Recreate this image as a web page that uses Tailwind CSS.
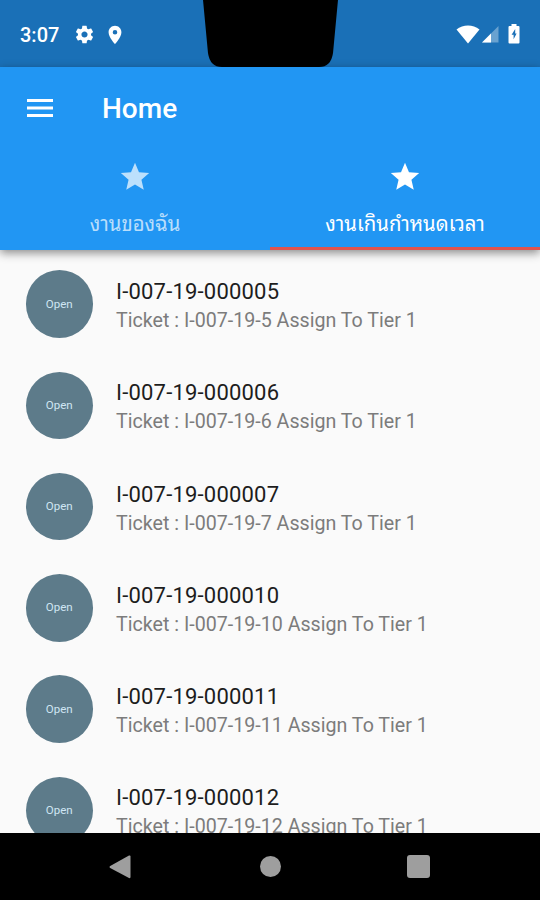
<!DOCTYPE html>
<html lang="th">

<head>
    <meta charset="UTF-8">
    <meta name="viewport" content="width=device-width, initial-scale=1.0">
    <title>Home</title>
    <script src="https://cdn.jsdelivr.net/npm/@tailwindcss/browser@4"></script>
</head>

<body class="bg-[#fafafa] font-[Roboto,'Noto_Sans_Thai',sans-serif]">
    <div class="w-[540px] h-[900px] flex flex-col overflow-hidden">

        <!-- Status Bar -->
        <div class="relative shrink-0 h-[67px] bg-[#1a70b7] text-white flex items-center justify-between pl-5 pr-[20px]">
            <div class="flex items-center pt-[2px]">
                <span class="text-[20px] leading-6 font-medium w-[54px]">3:07</span>
                <svg class="w-[21px] h-[21px]" viewBox="0 0 24 24" fill="currentColor">
                    <path d="M19.43 12.98c.04-.32.07-.64.07-.98s-.03-.66-.07-.98l2.11-1.65c.19-.15.24-.42.12-.64l-2-3.46c-.12-.22-.39-.3-.61-.22l-2.49 1c-.52-.4-1.08-.73-1.69-.98l-.38-2.65A.49.49 0 0 0 14 2h-4c-.25 0-.46.18-.49.42l-.38 2.65c-.61.25-1.17.59-1.69.98l-2.49-1c-.23-.09-.49 0-.61.22l-2 3.46c-.13.22-.07.49.12.64l2.11 1.65c-.04.32-.07.65-.07.98s.03.66.07.98l-2.11 1.65c-.19.15-.24.42-.12.64l2 3.46c.12.22.39.3.61.22l2.49-1c.52.4 1.08.73 1.69.98l.38 2.65c.03.24.24.42.49.42h4c.25 0 .46-.18.49-.42l.38-2.65c.61-.25 1.17-.59 1.69-.98l2.49 1c.23.09.49 0 .61-.22l2-3.46c.12-.22.07-.49-.12-.64l-2.11-1.65zM12 15.5c-1.93 0-3.5-1.57-3.5-3.5s1.57-3.5 3.5-3.5 3.5 1.57 3.5 3.5-1.57 3.5-3.5 3.5z"/>
                </svg>
                <svg class="w-[22px] h-[22px] ml-[9px]" viewBox="0 0 24 24" fill="currentColor">
                    <path d="M12 2C8.13 2 5 5.13 5 9c0 5.25 7 13 7 13s7-7.75 7-13c0-3.87-3.13-7-7-7zm0 9.5a2.5 2.5 0 0 1 0-5 2.5 2.5 0 0 1 0 5z"/>
                </svg>
            </div>

            <!-- Notch -->
            <svg class="absolute left-[202px] top-0 w-[137px] h-[67px]" viewBox="0 0 137 67">
                <path d="M1 0H136L131 53Q129 67 117 67H20Q8 67 6 53Z" fill="#000"/>
            </svg>

            <div class="flex items-center pt-[1px]">
                <svg class="w-6 h-[19px]" viewBox="0 0 24 19" fill="currentColor">
                    <path d="M12 18.5L0.5 4.5C7 -.8 17 -.8 23.5 4.5Z"/>
                </svg>
                <svg class="w-[17px] h-[17px] ml-[2px]" viewBox="0 0 17 17" fill="currentColor">
                    <path d="M16.5 0V16.5H0Z" fill-opacity=".35"/>
                    <path d="M9 7.5V16.5H0Z"/>
                </svg>
                <svg class="w-3 h-5 ml-[9px]" viewBox="0 0 12 20">
                    <path d="M3.5 0h5v2H10.5q1 0 1 1V18.5q0 1-1 1H1.5q-1 0-1-1V3q0-1 1-1H3.5Z" fill="#fff"/>
                    <path d="M7.2 5L3.6 10.8H5.6V15.2L8.6 9.6H7.2Z" fill="#1a70b7"/>
                </svg>
            </div>
        </div>

        <!-- App Bar -->
        <header class="relative z-10 shrink-0 h-[183px] bg-[#2196f3] text-white flex flex-col shadow-[0_3px_9px_rgba(0,0,0,0.45)]">
            <div class="h-[82px] flex items-center pl-[27px]">
                <svg class="w-[26px] h-[18px]" viewBox="0 0 26 18" fill="currentColor">
                    <path d="M0 0h26v3H0zM0 7.5h26v3H0zM0 15h26v3H0z"/>
                </svg>
                <h1 class="ml-[49px] pt-px text-[28px] font-medium">Home</h1>
            </div>
            <div class="flex flex-1">
                <div class="w-1/2 flex flex-col items-center pt-[11px] text-white/70">
                    <svg class="w-[34px] h-[34px]" viewBox="0 0 24 24" fill="currentColor">
                        <path d="M12 17.27L18.18 21l-1.64-7.03L22 9.24l-7.19-.61L12 2 9.19 8.63 2 9.24l5.46 4.73L5.82 21z"/>
                    </svg>
                    <span class="mt-[14px] text-[20.3px] leading-7 font-['Noto_Sans_Thai_Looped','Loma','Garuda','Sarabun','Waree',sans-serif]">งานของฉัน</span>
                </div>
                <div class="w-1/2 flex flex-col items-center pt-[11px] border-b-[3px] border-[#e0534d]">
                    <svg class="w-[34px] h-[34px]" viewBox="0 0 24 24" fill="currentColor">
                        <path d="M12 17.27L18.18 21l-1.64-7.03L22 9.24l-7.19-.61L12 2 9.19 8.63 2 9.24l5.46 4.73L5.82 21z"/>
                    </svg>
                    <span class="mt-[14px] text-[20.3px] leading-7 font-['Noto_Sans_Thai_Looped','Loma','Garuda','Sarabun','Waree',sans-serif]">งานเกินกำหนดเวลา</span>
                </div>
            </div>
        </header>

        <!-- Ticket List -->
        <main id="ticketList" class="flex-1 min-h-0 overflow-hidden pt-[3.5px]"></main>

        <!-- Navigation Bar -->
        <nav class="shrink-0 h-[67px] bg-black text-[#9e9e9e] flex items-center pl-[109px]">
            <svg class="w-[22px] h-6" viewBox="0 0 22 24" fill="currentColor">
                <path d="M1.2 11L20 .6q1.5-.6 1.5 1V22q0 1.600-1.5 1L1.2 13q-1.4-1 0-2z"/>
            </svg>
            <div class="ml-[129px] w-[21px] h-[21px] rounded-full bg-[#9e9e9e]"></div>
            <div class="ml-[126px] w-[23px] h-[23px] rounded-[3px] bg-[#9e9e9e]"></div>
        </nav>
    </div>

    <script>
        const tickets = [5, 6, 7, 10, 11, 12];

        document.getElementById('ticketList').innerHTML = tickets.map(no => `
            <div class="h-[101.25px] flex items-center pl-[25.5px]">
                <div class="w-[67.5px] h-[67.5px] rounded-full bg-[#5d7b8a] text-[#cfe6f3] text-[11.5px] flex items-center justify-center">Open</div>
                <div class="ml-[23px] pt-[4px] whitespace-nowrap">
                    <p class="text-[22px] leading-[29px] tracking-[0.2px] text-[#1d1d1d]">I-007-19-${String(no).padStart(6, '0')}</p>
                    <p class="text-[19.65px] leading-[29px] text-[#7c7c7c]">Ticket : I-007-19-${no} Assign To Tier 1</p>
                </div>
            </div>
        `).join('');
    </script>
</body>

</html>
